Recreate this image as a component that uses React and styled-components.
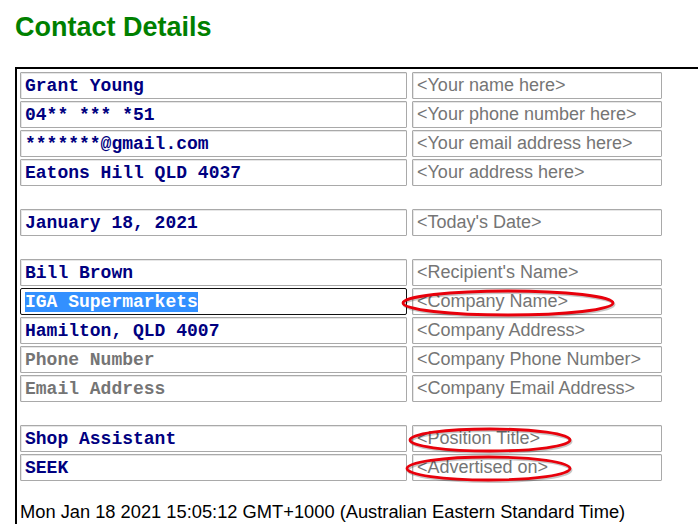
import React from "react";
import styled, { createGlobalStyle } from "styled-components";

const Global = createGlobalStyle`
  html, body { margin: 0; padding: 0; background: #fff; overflow: hidden; }
  body { font-family: "Liberation Sans", Arial, sans-serif; }
`;

const Page = styled.div`
  box-sizing: border-box;
  padding-left: 15px;
  width: 100vw;
  height: 100vh;
  display: flex;
  flex-direction: column;
  overflow: hidden;
`;

const Title = styled.h1`
  margin: 11px 0 0 0;
  font-family: "Liberation Sans", Arial, sans-serif;
  font-weight: bold;
  font-size: 27px;
  line-height: 32px;
  color: #008000;
`;

const Box = styled.div`
  flex: 1;
  min-height: 0;
  margin-top: 24px;
  border-left: 2px solid #000;
  border-top: 2px solid #000;
  padding: 3px 0 0 3px;
  overflow: hidden;
`;

const Grid = styled.div`
  display: grid;
  grid-template-columns: 387px 250px;
  column-gap: 5px;
  row-gap: 2px;
`;

const Spacer = styled.div`
  grid-column: 1 / span 2;
  height: 19px;
`;

const Field = styled.div`
  position: relative;
  box-sizing: border-box;
  height: 27px;
  border: 1px solid ${(p) => (p.$focused ? "#101010" : "#a9a9a9")};
  border-radius: ${(p) => (p.$focused ? "2px" : "1px")};
  box-shadow: ${(p) => (p.$focused ? "none" : "inset 1px 1px 0 #e6e6e6")};
  padding: 0 4px;
  display: flex;
  align-items: center;
  white-space: nowrap;
  font-size: 18px;
  font-family: ${(p) =>
    p.$mono
      ? '"Liberation Mono", "Courier New", monospace'
      : '"Liberation Sans", Arial, sans-serif'};
  font-weight: ${(p) => (p.$mono ? "bold" : "normal")};
  color: ${(p) => (p.$hint ? "#757575" : p.$mono ? "#000080" : "#757575")};
`;

const Selected = styled.span`
  background: #3390ff;
  color: #fff;
`;

const Mark = styled.svg`
  position: absolute;
  overflow: visible;
  pointer-events: none;
`;

const Stamp = styled.div`
  margin-top: 20px;
  font-family: "Liberation Sans", Arial, sans-serif;
  font-size: 18.3px;
  line-height: 21px;
  color: #000;
  white-space: nowrap;
`;

function Ellipse({ left, top, width, height }) {
  return (
    <Mark
      style={{ left, top, width, height }}
      viewBox={`0 0 ${width} ${height}`}
    >
      <ellipse
        cx={width / 2 + 1}
        cy={height / 2 + 1.5}
        rx={width / 2 - 1}
        ry={height / 2 - 1}
        fill="none"
        stroke="rgba(0,0,0,0.22)"
        strokeWidth="3"
      />
      <ellipse
        cx={width / 2}
        cy={height / 2}
        rx={width / 2 - 1}
        ry={height / 2 - 1}
        fill="none"
        stroke="#e8000b"
        strokeWidth="2.8"
      />
    </Mark>
  );
}

const groups = [
  [
    { v: "Grant Young", p: "<Your name here>" },
    { v: "04** *** *51", p: "<Your phone number here>" },
    { v: "*******@gmail.com", p: "<Your email address here>" },
    { v: "Eatons Hill QLD 4037", p: "<Your address here>" },
  ],
  [{ v: "January 18, 2021", p: "<Today's Date>" }],
  [
    { v: "Bill Brown", p: "<Recipient's Name>" },
    {
      v: "IGA Supermarkets",
      p: "<Company Name>",
      sel: true,
      mark: { left: -11, top: 1, width: 212, height: 26 },
    },
    { v: "Hamilton, QLD 4007", p: "<Company Address>" },
    { v: "Phone Number", p: "<Company Phone Number>", hint: true },
    { v: "Email Address", p: "<Company Email Address>", hint: true },
  ],
  [
    {
      v: "Shop Assistant",
      p: "<Position Title>",
      mark: { left: -4, top: 2, width: 162, height: 24 },
    },
    {
      v: "SEEK",
      p: "<Advertised on>",
      mark: { left: -7, top: 1, width: 165, height: 25 },
    },
  ],
];

export default function App() {
  return (
    <Page>
      <Global />
      <Title>Contact Details</Title>
      <Box>
        <Grid>
          {groups.map((g, gi) => (
            <React.Fragment key={gi}>
              {gi > 0 && <Spacer />}
              {g.map((r, ri) => (
                <React.Fragment key={ri}>
                  <Field $mono $hint={r.hint} $focused={r.sel}>
                    {r.sel ? <Selected>{r.v}</Selected> : r.v}
                  </Field>
                  <Field>
                    {r.p}
                    {r.mark && <Ellipse {...r.mark} />}
                  </Field>
                </React.Fragment>
              ))}
            </React.Fragment>
          ))}
        </Grid>
        <Stamp>
          Mon Jan 18 2021 15:05:12 GMT+1000 (Australian Eastern Standard Time)
        </Stamp>
      </Box>
    </Page>
  );
}
